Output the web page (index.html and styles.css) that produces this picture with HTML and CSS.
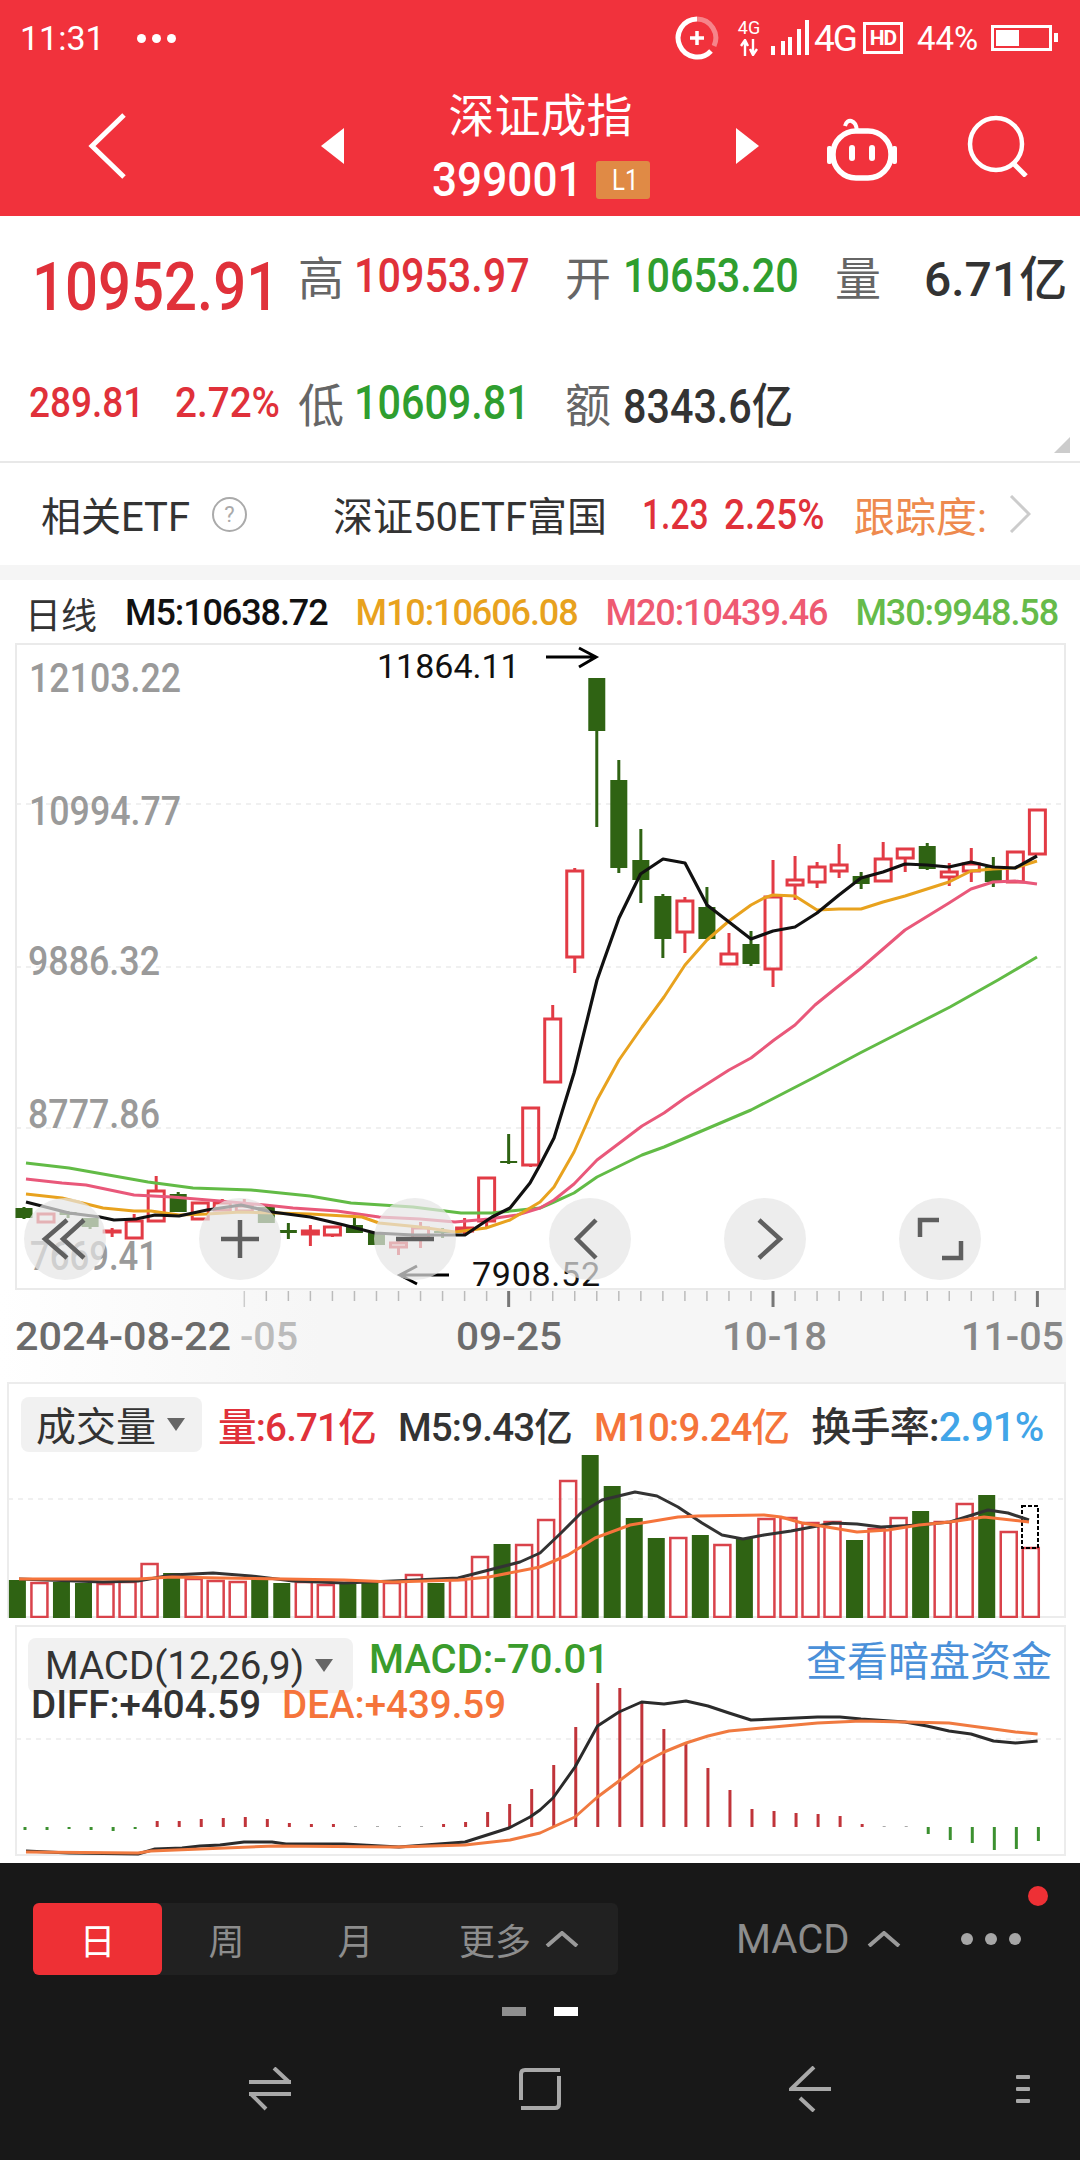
FILE: index.html
```html
<!DOCTYPE html>
<html lang="zh">
<head>
    <meta charset="UTF-8">
    <meta name="viewport" content="width=device-width, initial-scale=1.0">
    <title>深证成指</title>
    <link rel="stylesheet" href="styles.css">
</head>
<body>
<div class="app">

    <!-- Red header -->
    <header class="header">
        <div class="status">
            <div class="status-left">
                <span class="clock">11:31</span>
                <span class="status-dots"><i></i><i></i><i></i></span>
            </div>
            <div class="status-right">
                <svg class="ic-boost" viewBox="0 0 44 44">
                    <path d="M22 3 A19 19 0 1 0 36 35" fill="none" stroke="#fff" stroke-width="5"/>
                    <path d="M22 3 A19 19 0 0 1 39 30" fill="none" stroke="#fff" stroke-opacity=".4" stroke-width="5"/>
                    <path d="M15 22 H29 M22 15 V29" stroke="#fff" stroke-width="3.5"/>
                </svg>
                <div class="net">
                    <span>4G</span>
                    <svg viewBox="0 0 18 17" width="18" height="17">
                        <path d="M5 17 V2 M1 7 L5 1 L8 7 M13 0 V15 M10 10 L13 16 L17 10" fill="none" stroke="#fff" stroke-width="2.4"/>
                    </svg>
                </div>
                <svg class="ic-signal" viewBox="0 0 38 36">
                    <rect x="0" y="26" width="4" height="9" fill="#fff"/>
                    <rect x="10" y="21" width="4" height="14" fill="#fff"/>
                    <rect x="17" y="17" width="4" height="18" fill="#fff"/>
                    <rect x="26" y="9" width="4" height="26" fill="#fff"/>
                    <rect x="34" y="0" width="4" height="35" fill="#fff"/>
                </svg>
                <span class="net-big">4G</span>
                <span class="hd">HD</span>
                <span class="battery-text">44%</span>
                <div class="battery"><i></i></div>
            </div>
        </div>

        <div class="titlebar">
            <svg class="ic-back" viewBox="0 0 40 70">
                <path d="M36 4 L4 35 L36 66" fill="none" stroke="#fff" stroke-width="5"/>
            </svg>
            <span class="tri tri-left"></span>
            <div class="title">
                <div class="title-name">深证成指</div>
                <div class="title-code"><span class="code-num"><span class="squeeze sq-92">399001</span></span><span class="badge"><span class="squeeze sq-80">L1</span></span></div>
            </div>
            <span class="tri tri-right"></span>
            <div class="title-tools">
                <svg class="ic-robot" viewBox="0 0 70 64">
                    <path d="M18 9 C20 1 29 2 30 14" fill="none" stroke="#fff" stroke-width="4"/>
                    <rect x="6" y="14" width="58" height="47" rx="23" fill="none" stroke="#fff" stroke-width="5.5"/>
                    <rect x="0" y="29" width="5" height="18" rx="2" fill="#fff"/>
                    <rect x="65" y="29" width="5" height="18" rx="2" fill="#fff"/>
                    <rect x="22" y="28" width="6" height="16" rx="3" fill="#fff"/>
                    <rect x="42" y="28" width="6" height="16" rx="3" fill="#fff"/>
                </svg>
                <svg class="ic-search" viewBox="0 0 62 62">
                    <circle cx="29" cy="29" r="26" fill="none" stroke="#fff" stroke-width="4.5"/>
                    <path d="M46 48 L59 61" stroke="#fff" stroke-width="5"/>
                </svg>
            </div>
        </div>
    </header>

    <!-- Quote block -->
    <section class="quote">
        <div class="price"><span class="squeeze sq-88">10952.91</span></div>
        <div class="q-label">高</div>
        <div class="q-num up"><span class="squeeze sq-86">10953.97</span></div>
        <div class="q-label">开</div>
        <div class="q-num down"><span class="squeeze sq-86">10653.20</span></div>
        <div class="q-label">量</div>
        <div class="q-num dark">6.71亿</div>

        <div class="change">
            <span class="change-val"><span class="squeeze sq-88">289.81</span></span>
            <span class="change-val"><span class="squeeze sq-92">2.72%</span></span>
        </div>
        <div class="q-label">低</div>
        <div class="q-num down"><span class="squeeze sq-86">10609.81</span></div>
        <div class="q-label">额</div>
        <div class="q-num dark"><span class="squeeze sq-86">8343.6亿</span></div>
        <span class="corner"></span>
    </section>

    <section class="etf">
        <span class="etf-title">相关ETF</span>
        <span class="etf-help">?</span>
        <span class="etf-name">深证50ETF富国</span>
        <span class="etf-val"><span class="squeeze sq-80">1.23</span></span>
        <span class="etf-val"><span class="squeeze sq-88">2.25%</span></span>
        <span class="etf-track">跟踪度:</span>
        <svg class="ic-more" viewBox="0 0 22 38">
            <path d="M2 1 L20 19 L2 37" fill="none" stroke="#ccc" stroke-width="3"/>
        </svg>
    </section>

    <!-- K line -->
    <section class="kline">
        <div class="legend">
            <span class="legend-name">日线</span>
            <span class="c-m5">M5:10638.72</span>
            <span class="c-m10">M10:10606.08</span>
            <span class="c-m20">M20:10439.46</span>
            <span class="c-m30">M30:9948.58</span>
        </div>
        <div class="kline-chart">
            <svg id="main-chart" class="chart" viewBox="0 643 1080 739">
                <defs>
                    <linearGradient id="axis-fade" x1="0" x2="1" y1="0" y2="0">
                        <stop offset="0" stop-color="#fff"/>
                        <stop offset=".3" stop-color="#f6f6f6"/>
                    </linearGradient>
                </defs>
                <rect x="0" y="1290" width="1066" height="92" fill="url(#axis-fade)"/>
                <rect x="16" y="644" width="1049" height="645" fill="#fff" stroke="#eaeaea" stroke-width="2"/>
                <path class="grid" d="M16 804 H1065 M16 967 H1065 M16 1128 H1065"/>
                <text class="y-label" x="29" y="692" textLength="152" lengthAdjust="spacingAndGlyphs">12103.22</text>
                <text class="y-label" x="29" y="825" textLength="152" lengthAdjust="spacingAndGlyphs">10994.77</text>
                <text class="y-label" x="28" y="975" textLength="132" lengthAdjust="spacingAndGlyphs">9886.32</text>
                <text class="y-label" x="28" y="1128" textLength="132" lengthAdjust="spacingAndGlyphs">8777.86</text>
                <text class="y-label" x="30" y="1270" textLength="128" lengthAdjust="spacingAndGlyphs">7669.41</text>
                <text class="x-label" x="15" y="1350" textLength="216" lengthAdjust="spacingAndGlyphs">2024-08-22</text>
                <text class="x-label x-faded" x="240" y="1350" textLength="58" lengthAdjust="spacingAndGlyphs">-05</text>
                <text class="x-label" x="456" y="1350" textLength="106" lengthAdjust="spacingAndGlyphs">09-25</text>
                <text class="x-label x-light" x="722" y="1350" textLength="105" lengthAdjust="spacingAndGlyphs">10-18</text>
                <text class="x-label x-light" x="961" y="1350" textLength="103" lengthAdjust="spacingAndGlyphs">11-05</text>
                <text class="mark" x="377" y="678">11864.11</text>
                <path class="mark-arrow" d="M546 657 H596 M579 648 L596 657 L579 667"/>
                <text class="mark" x="472" y="1286" textLength="128">7908.52</text>
                <path class="mark-arrow" d="M449 1275 H400 M417 1266 L400 1275 L417 1284"/>
            </svg>
            <div class="chart-btns">
                <button class="round-btn">
                    <svg viewBox="0 0 82 82"><path d="M43 22 L21 41 L43 60 M60 22 L39 41 L60 60"/></svg>
                </button>
                <button class="round-btn">
                    <svg viewBox="0 0 82 82"><path d="M22 41 H60 M41 22 V60"/></svg>
                </button>
                <button class="round-btn">
                    <svg viewBox="0 0 82 82"><path d="M22 41 H60"/></svg>
                </button>
                <button class="round-btn">
                    <svg viewBox="0 0 82 82"><path d="M47 22 L28 41 L47 60"/></svg>
                </button>
                <button class="round-btn">
                    <svg viewBox="0 0 82 82"><path d="M35 22 L56 41 L35 60"/></svg>
                </button>
                <button class="round-btn">
                    <svg viewBox="0 0 82 82"><path d="M21 39 V22 H40 M43 60 H62 V43"/></svg>
                </button>
            </div>
        </div>
    </section>

    <!-- Volume -->
    <section class="panel panel-vol">
        <svg id="vol-chart" class="chart" viewBox="0 1382 1080 236"></svg>
        <div class="panel-head vol-head">
            <span class="chip">成交量<i class="chip-arrow"></i></span>
            <span class="up">量:6.71亿</span>
            <span class="dark">M5:9.43亿</span>
            <span class="c-orange">M10:9.24亿</span>
            <span class="dark vol-turn">换手率:<span class="c-blue">2.91%</span></span>
        </div>
    </section>

    <!-- MACD -->
    <section class="panel panel-macd">
        <svg id="macd-chart" class="chart" viewBox="0 1625 1080 231"></svg>
        <div class="panel-head macd-head">
            <div class="macd-top">
                <span class="chip">MACD(12,26,9)<i class="chip-arrow"></i></span>
                <span class="macd-value">MACD:-70.01</span>
                <span class="macd-link">查看暗盘资金</span>
            </div>
            <div class="macd-sub">
                <span class="dark">DIFF:+404.59</span>
                <span class="c-orange">DEA:+439.59</span>
            </div>
        </div>
    </section>

    <!-- Dark bottom -->
    <footer class="bottom">
        <div class="periods">
            <div class="period-group">
                <span class="period active">日</span>
                <span class="period">周</span>
                <span class="period">月</span>
                <span class="period period-more">更多<svg class="ic-up" viewBox="0 0 34 16"><path d="M2 15 L17 2 L32 15"/></svg></span>
            </div>
            <span class="indicator">MACD<svg class="ic-up" viewBox="0 0 34 16"><path d="M2 15 L17 2 L32 15"/></svg></span>
            <span class="more-dots"><i></i><i></i><i></i></span>
            <span class="red-dot"></span>
        </div>
        <div class="pager"><i></i><i class="on"></i></div>
        <div class="navbar">
            <svg viewBox="0 0 42 44" width="42" height="44">
                <path d="M0 15 H42 M25 1 L40 15 M42 27 H0 M2 27 L17 42"/>
            </svg>
            <svg viewBox="0 0 42 44" width="42" height="44">
                <path d="M2 33 V7 Q2 3 6 3 H41 M40 9 V37 Q40 41 36 41 H2"/>
            </svg>
            <svg viewBox="0 0 42 46" width="42" height="46">
                <path d="M25 1 L2 23 H42 M11 32 L25 45"/>
            </svg>
            <div class="nav-menu"><i></i><i></i><i></i></div>
        </div>
    </footer>
</div>

<script src="charts.js"></script>
</body>
</html>
```

FILE: styles.css
```css
* {
    box-sizing: border-box;
}
body {
    margin: 0;
    background: #fff;
    font-family: Roboto, "Noto Sans CJK SC", sans-serif;
}
i {
    display: block;
}
.app {
    width: 1080px;
    height: 2160px;
    overflow: hidden;
    color: #333;
}

/* the numbers up top are a condensed face, no such font here */
.squeeze {
    display: inline-block;
    white-space: nowrap;
    transform-origin: left center;
}
.sq-80 {
    transform: scaleX(.8);
}
.sq-86 {
    transform: scaleX(.86);
}
.sq-88 {
    transform: scaleX(.88);
}
.sq-92 {
    transform: scaleX(.92);
}

/* header */
.header {
    height: 216px;
    background: #f1323c;
    color: #fff;
}
.status {
    height: 76px;
    display: flex;
    justify-content: space-between;
    align-items: center;
}
.status-left {
    display: flex;
    align-items: center;
    padding-left: 20px;
    gap: 32px;
}
.clock {
    font-size: 34px;
}
.status-dots {
    display: flex;
    gap: 6px;
}
.status-dots i {
    width: 9px;
    height: 9px;
    border-radius: 50%;
    background: #fff;
}
.status-right {
    display: flex;
    align-items: center;
    padding-right: 28px;
}
.ic-boost {
    width: 44px;
    height: 44px;
}
.net {
    width: 26px;
    margin-left: 17px;
    display: flex;
    flex-direction: column;
    align-items: center;
    gap: 3px;
    font-size: 18px;
    line-height: 16px;
}
.ic-signal {
    width: 38px;
    height: 36px;
    margin-left: 9px;
}
.net-big {
    font-size: 37px;
    letter-spacing: -2px;
    margin-left: 5px;
}
.hd {
    margin-left: 7px;
    width: 40px;
    height: 32px;
    border: 3px solid #fff;
    font-size: 21px;
    font-weight: 700;
    line-height: 26px;
    text-align: center;
    letter-spacing: -1px;
}
.battery-text {
    font-size: 33px;
    margin-left: 14px;
    width: 65px;
}
.battery {
    position: relative;
    width: 61px;
    height: 26px;
    margin-left: 9px;
    border: 3px solid #fff;
    padding: 2px;
}
.battery i {
    width: 23px;
    height: 16px;
    background: #fff;
}
.battery::after {
    content: "";
    position: absolute;
    right: -9px;
    top: 5px;
    width: 4px;
    height: 9px;
    background: #fff;
}
.titlebar {
    height: 140px;
    display: grid;
    grid-template-columns: 321px 24px 391px 24px 1fr;
    align-items: center;
}
.ic-back {
    width: 40px;
    height: 70px;
    margin-left: 88px;
}
.tri {
    width: 0;
    height: 0;
    border-top: 18px solid transparent;
    border-bottom: 18px solid transparent;
}
.tri-left {
    border-right: 23px solid #fff;
}
.tri-right {
    border-left: 23px solid #fff;
}
.title {
    text-align: center;
}
.title-name {
    font-size: 46px;
    line-height: 48px;
}
.title-code {
    margin-top: 20px;
    height: 40px;
    display: flex;
    justify-content: center;
    align-items: center;
    gap: 17px;
}
.code-num {
    width: 147px;
    font-size: 48px;
    font-weight: 500;
    line-height: 40px;
    text-align: left;
}
.badge {
    width: 54px;
    height: 38px;
    padding-left: 16px;
    background: #e08a45;
    border-radius: 3px;
    font-size: 30px;
    line-height: 38px;
    text-align: left;
}
.title-tools {
    display: flex;
    align-items: center;
    padding-left: 67px;
    gap: 70px;
}
.ic-robot {
    width: 70px;
    height: 64px;
    margin-top: 6px;
}
.ic-search {
    width: 62px;
    height: 62px;
}

/* quote */
.quote {
    position: relative;
    height: 247px;
    padding-top: 4px;
    border-bottom: 2px solid #e8e8e8;
    display: grid;
    grid-template-columns: 298px 56px 211px 58px 212px 89px 1fr;
    grid-auto-rows: 110px;
    row-gap: 17px;
    align-items: center;
}
.price {
    padding: 24px 0 0 32px;
    font-size: 66px;
    font-weight: 500;
    color: #e0313a;
}
.q-label {
    font-family: "Noto Sans CJK SC", sans-serif;
    font-size: 46px;
    color: #666;
}
.q-num {
    font-size: 48px;
    font-weight: 500;
    white-space: nowrap;
}
.change {
    display: flex;
    padding-left: 29px;
    font-size: 42px;
    font-weight: 500;
    color: #e0313a;
}
.change-val {
    flex: none;
    width: 146px;
}
.up {
    color: #e0313a;
}
.down {
    color: #2f9e2f;
}
.dark {
    color: #333;
}
.corner {
    position: absolute;
    right: 10px;
    bottom: 8px;
    width: 0;
    height: 0;
    border-left: 16px solid transparent;
    border-bottom: 16px solid #ccc;
}

/* etf row */
.etf {
    height: 117px;
    display: flex;
    align-items: center;
    font-size: 38px;
    border-bottom: 15px solid #f5f5f5;
}
.etf > * {
    flex: none;
}
.etf-title {
    margin-left: 41px;
    width: 171px;
    font-size: 40px;
}
.etf-help {
    width: 35px;
    height: 35px;
    border: 2px solid #aaa;
    border-radius: 50%;
    color: #aaa;
    font-size: 22px;
    line-height: 31px;
    text-align: center;
}
.etf-name {
    margin-left: 86px;
    width: 309px;
    font-size: 40px;
}
.etf-val {
    width: 82px;
    color: #e0313a;
    font-size: 42px;
    font-weight: 500;
}
.etf-val + .etf-val {
    width: 130px;
}
.etf-track {
    width: 155px;
    color: #ee8a4e;
    font-size: 41px;
}
.ic-more {
    width: 22px;
    height: 38px;
}

/* k line */
.legend {
    height: 63px;
    padding: 3px 0 0 25px;
    display: flex;
    align-items: center;
    gap: 28px;
    font-size: 36px;
    font-weight: 500;
    letter-spacing: -1.1px;
    white-space: nowrap;
}
.legend-name {
    font-family: "Noto Sans CJK SC", sans-serif;
    font-weight: 400;
    font-size: 36px;
    letter-spacing: 0;
}
.c-m5 {
    color: #111;
}
.c-m10 {
    color: #e8a21e;
}
.c-m20 {
    color: #ee5a72;
}
.c-m30 {
    color: #66bb4a;
}
.c-orange {
    color: #f5743b;
}
.c-blue {
    color: #41a5e8;
}
.kline-chart {
    position: relative;
    height: 739px;
}
.chart {
    display: block;
    width: 1080px;
}
.grid {
    fill: none;
    stroke: #ebebeb;
    stroke-width: 1.5;
    stroke-dasharray: 5 5;
}
.y-label {
    font-size: 40px;
    font-weight: 500;
    fill: #9a9a9a;
}
.x-label {
    font-size: 38px;
    font-weight: 500;
    fill: #6b6b6b;
}
.x-light {
    fill: #888;
}
.x-faded {
    fill: #bbb;
}
.mark {
    font-size: 34px;
    fill: #111;
}
.mark-arrow {
    fill: none;
    stroke: #000;
    stroke-width: 3;
}
.chart-btns {
    position: absolute;
    left: 24px;
    top: 555px;
    display: flex;
    gap: 93px;
}
.round-btn {
    width: 82px;
    height: 82px;
    padding: 0;
    border: 0;
    border-radius: 50%;
    background: rgba(230, 230, 230, .7);
}
.round-btn svg {
    display: block;
    fill: none;
    stroke: #5f5f5f;
    stroke-width: 4.5;
}

/* lower panels */
.panel {
    position: relative;
}
.panel-vol {
    height: 243px;
}
.panel-macd {
    height: 238px;
}
.panel-head {
    position: absolute;
    left: 0;
    top: 0;
    width: 1080px;
    font-size: 38.5px;
    font-weight: 500;
    white-space: nowrap;
}
.vol-head {
    padding: 13px 0 0 21px;
    display: flex;
    align-items: center;
    gap: 22px;
    letter-spacing: -.8px;
}
.vol-turn {
    font-size: 40px;
}
.chip {
    height: 55px;
    padding-left: 15px;
    display: flex;
    align-items: center;
    background: #f1f1f1;
    border-radius: 8px;
    color: #333;
    font-weight: 400;
    letter-spacing: 0;
}
.vol-head .chip {
    width: 181px;
    font-size: 40px;
    font-family: "Noto Sans CJK SC", sans-serif;
    margin-right: -6px;
}
.chip-arrow {
    margin-left: 11px;
    width: 0;
    height: 0;
    border-left: 9px solid transparent;
    border-right: 9px solid transparent;
    border-top: 13px solid #666;
}
.macd-head {
    padding: 13px 0 0 28px;
}
.macd-top {
    display: flex;
    align-items: flex-start;
}
.macd-head .chip {
    width: 325px;
    padding-left: 17px;
}
.macd-value {
    margin-left: 16px;
    margin-top: -2px;
    font-size: 40px;
    color: #3a9c2c;
}
.macd-link {
    margin-left: 197px;
    margin-top: -10px;
    font-family: "Noto Sans CJK SC", sans-serif;
    font-size: 41px;
    font-weight: 400;
    color: #4a90d9;
}
.macd-sub {
    display: flex;
    gap: 21px;
    margin: -10px 0 0 3px;
    line-height: 44px;
}

/* dark bottom */
.bottom {
    height: 297px;
    background: #181818;
    color: #8d8d8d;
}
.periods {
    position: relative;
    padding: 40px 0 0 33px;
    display: flex;
    align-items: center;
}
.period-group {
    width: 585px;
    height: 72px;
    background: #212121;
    border-radius: 6px;
    display: flex;
    align-items: center;
    font-size: 36px;
}
.period {
    width: 129px;
    height: 72px;
    display: flex;
    align-items: center;
    justify-content: center;
    border-radius: 6px;
}
.period.active {
    background: #ee3035;
    color: #fff;
}
.period-more {
    width: 198px;
    gap: 14px;
}
.ic-up {
    width: 34px;
    height: 16px;
    fill: none;
    stroke: #9a9a9a;
    stroke-width: 4;
}
.indicator {
    margin-left: 118px;
    display: flex;
    align-items: center;
    gap: 18px;
    font-size: 40px;
}
.more-dots {
    margin-left: 60px;
    display: flex;
    gap: 12px;
}
.more-dots i {
    width: 12px;
    height: 12px;
    border-radius: 50%;
    background: #a6a6a6;
}
.red-dot {
    position: absolute;
    left: 1028px;
    top: 23px;
    width: 20px;
    height: 20px;
    border-radius: 50%;
    background: #ee3035;
}
.pager {
    margin-top: 32px;
    display: flex;
    justify-content: center;
    gap: 28px;
}
.pager i {
    width: 24px;
    height: 9px;
    background: #8f8f8f;
}
.pager i.on {
    background: #fff;
}
.navbar {
    margin-top: 50px;
    padding-left: 249px;
    display: flex;
    align-items: center;
    gap: 228px;
}
.navbar svg {
    fill: none;
    stroke: #a8a8a8;
    stroke-width: 4;
}
.nav-menu {
    margin-left: -43px;
    display: flex;
    flex-direction: column;
    gap: 8px;
}
.nav-menu i {
    width: 14px;
    height: 4px;
    background: #a8a8a8;
    border-radius: 1px;
}
```

FILE: charts.js
```js
// chart data is in page pixels, the svg viewBoxes use the same coordinates
const SVG_NS = 'http://www.w3.org/2000/svg';

function add(parent, name, attrs) {
    const node = document.createElementNS(SVG_NS, name);
    for (const key in attrs) node.setAttribute(key, attrs[key]);
    parent.appendChild(node);
    return node;
}

function drawLine(parent, points, color, width) {
    add(parent, 'polyline', {
        points: points.map(p => p.join(',')).join(' '),
        fill: 'none',
        stroke: color,
        'stroke-width': width,
        'stroke-linejoin': 'round'
    });
}

const RED = '#e23b45';
const GREEN = '#2f6313';

// kind, high, top, bottom, low
const candles = [
    ['g', 1207, 1208, 1218, 1219], ['r', 1213, 1214, 1222, 1223], ['g', 1211, 1212, 1215, 1218],
    ['g', 1218, 1218, 1227, 1229], ['r', 1228, 1231, 1232, 1237], ['r', 1214, 1221, 1238, 1238],
    ['r', 1176, 1191, 1221, 1221], ['g', 1192, 1194, 1212, 1212], ['r', 1202, 1203, 1219, 1219],
    ['r', 1199, 1203, 1210, 1211], ['r', 1199, 1206, 1211, 1212], ['g', 1205, 1207, 1223, 1223],
    ['g', 1223, 1230, 1233, 1239], ['r', 1225, 1231, 1234, 1246], ['r', 1227, 1227, 1235, 1237],
    ['g', 1217, 1225, 1233, 1233], ['g', 1233, 1233, 1245, 1245], ['r', 1241, 1243, 1247, 1255],
    ['r', 1222, 1228, 1238, 1248], ['g', 1228, 1231, 1233, 1238], ['r', 1218, 1228, 1231, 1235],
    ['r', 1177, 1178, 1221, 1227], ['g', 1134, 1161, 1163, 1164], ['r', 1107, 1108, 1165, 1167],
    ['r', 1005, 1019, 1082, 1082], ['r', 868, 871, 957, 973], ['g', 678, 678, 731, 827],
    ['g', 760, 780, 868, 873], ['g', 829, 860, 880, 903], ['g', 894, 896, 939, 958],
    ['r', 897, 901, 932, 953], ['g', 887, 907, 939, 939], ['r', 933, 954, 964, 964],
    ['g', 931, 944, 964, 966], ['r', 860, 897, 969, 987], ['r', 856, 880, 885, 900],
    ['r', 862, 867, 882, 888], ['r', 844, 865, 871, 878], ['g', 872, 876, 884, 889],
    ['r', 842, 859, 881, 881], ['r', 849, 849, 858, 872], ['g', 843, 846, 869, 870],
    ['r', 863, 872, 877, 886], ['r', 848, 864, 871, 882], ['g', 857, 867, 882, 887],
    ['r', 852, 852, 882, 882], ['r', 810, 810, 854, 854]
];

const ma5 = [[26,1202],[69,1213],[100,1217],[114,1220],[136,1219],[155,1215],[179,1216],[207,1210],[241,1205],[272,1212],[310,1217],[344,1225],[375,1233],[413,1235],[465,1235],[492,1217],[510,1208],[530,1183],[540,1165],[554,1138],[574,1073],[597,980],[604,960],[619,918],[640.5,874],[663,859],[685,863],[707,905],[729,922],[751,939],[773,931],[795,927],[817,913],[839,895],[861,878],[883,872],[905,864],[927,865],[949,867],[971,862],[993,867],[1015,868],[1037,856]];
const ma10 = [[26,1194],[62,1198],[103,1208],[134,1211],[151,1211],[179,1215],[207,1214],[241,1212],[275,1213],[310,1214],[362,1217],[379,1223],[420,1227],[455,1232],[486,1228],[510,1220],[530,1208],[540,1202],[554,1187],[574,1152],[597,1100],[619,1060],[642,1027],[664,997],[685,965],[707,940],[729,921],[751,905],[764,898],[773,895],[795,896],[817,910],[839,909],[861,909],[883,902],[905,896],[927,889],[949,882],[971,871],[993,869],[1015,868],[1037,861]];
const ma20 = [[26,1179],[62,1183],[86,1185],[134,1195],[172,1197],[220,1201],[265,1205],[293,1208],[337,1211],[379,1217],[420,1219],[455,1222],[489,1219],[517,1215],[540,1208],[554,1200],[574,1184],[597,1160],[642,1126],[664,1113],[685,1098],[729,1070],[751,1058],[774,1040],[795,1025],[815,1005],[836,988],[860,969],[905,930],[949,903],[971,889],[993,882],[1015,881],[1037,884]];
const ma30 = [[26,1163],[69,1168],[148,1182],[193,1188],[251,1190],[310,1196],[351,1203],[413,1207],[461,1213],[492,1213],[540,1208],[554,1202],[574,1193],[597,1177],[642,1155],[664,1147],[751,1110],[815,1077],[860,1053],[905,1030],[950,1007],[998,980],[1037,957]];

function drawCandles(svg) {
    candles.forEach((c, i) => {
        const x = 24 + 22.03 * i;
        const color = c[0] === 'r' ? RED : GREEN;
        add(svg, 'path', {
            d: `M${x} ${c[1]} V${c[2]} M${x} ${c[3]} V${c[4]}`,
            stroke: color,
            'stroke-width': 3
        });
        if (c[0] === 'r') {
            add(svg, 'rect', { x: x - 8, y: c[2], width: 16, height: c[3] - c[2], fill: 'none', stroke: color, 'stroke-width': 3 });
        } else {
            add(svg, 'rect', { x: x - 8.5, y: c[2], width: 17, height: c[3] - c[2], fill: color });
        }
    });
}

function drawTicks(svg) {
    for (let i = 10; i <= 46; i++) {
        const x = 24 + 22.03 * i;
        const long = (i - 10) % 12 === 0;
        add(svg, 'line', {
            x1: x, x2: x, y1: 1291, y2: long ? 1307 : 1301,
            stroke: i === 10 ? '#ccc' : long ? '#777' : '#bbb',
            'stroke-width': long && i > 10 ? 3 : 1.5
        });
    }
}

const mainChart = document.getElementById('main-chart');
drawTicks(mainChart);
drawCandles(mainChart);
drawLine(mainChart, ma30, '#62bb46', 3);
drawLine(mainChart, ma20, '#e9587a', 3);
drawLine(mainChart, ma10, '#e8a21e', 3);
drawLine(mainChart, ma5, '#111', 3.2);

// volume: g = solid green, r = hollow red, value is the bar top
const volumes = [
    ['g',1580],['r',1583],['g',1582],['g',1583],['r',1584],['r',1582],['r',1564],['g',1573],
    ['r',1579],['r',1581],['r',1582],['g',1579],['g',1583],['r',1582],['r',1585],['g',1583],
    ['g',1583],['r',1583],['r',1575],['g',1583],['r',1580],['r',1557],['g',1544],['r',1545],
    ['r',1520],['r',1481],['g',1455],['g',1486],['g',1518],['g',1538],['r',1538],['g',1535],
    ['r',1545],['g',1538],['r',1519],['r',1518],['r',1523],['r',1522],['g',1540],['r',1529],
    ['r',1518],['g',1511],['r',1522],['r',1504],['g',1495],['r',1532],['r',1548]
];
const volM5 = [[19,1579],[103,1582],[138,1581],[172,1575],[213,1573],[251,1576],[293,1581],[344,1583],[393,1581],[458,1578],[489,1570],[520,1562],[540,1553],[561,1533],[581,1513],[602,1500],[635,1492],[657,1496],[678,1507],[702,1523],[722,1535],[743,1539],[764,1535],[791,1531],[833,1523],[857,1524],[881,1527],[919,1525],[950,1522],[988,1510],[1008,1513],[1029,1520]];
const volM10 = [[19,1579],[138,1579],[172,1577],[220,1578],[344,1580],[393,1582],[458,1580],[489,1577],[540,1567],[568,1555],[595,1538],[630,1525],[678,1517],[698,1516],[764,1515],[781,1517],[802,1523],[833,1528],[857,1532],[888,1530],[919,1525],[950,1522],[984,1517],[1029,1522]];

const volChart = document.getElementById('vol-chart');
add(volChart, 'rect', { x: 8, y: 1383, width: 1057, height: 234, fill: '#fff', stroke: '#ececec', 'stroke-width': 2 });
add(volChart, 'path', { class: 'grid', d: 'M8 1499 H1065' });
volumes.forEach((v, i) => {
    const x = 17.4 + 22.03 * i;
    if (v[0] === 'g') {
        add(volChart, 'rect', { x: x - 8.5, y: v[1], width: 17, height: 1618 - v[1], fill: GREEN });
    } else {
        add(volChart, 'rect', { x: x - 8, y: v[1], width: 16, height: 1617 - v[1], fill: 'none', stroke: '#d9434b', 'stroke-width': 2.5 });
    }
});
add(volChart, 'rect', { x: 1022, y: 1506, width: 16, height: 42, fill: 'none', stroke: '#000', 'stroke-width': 2, 'stroke-dasharray': '4 2' });
drawLine(volChart, volM5, '#333', 3);
drawLine(volChart, volM10, '#f5743b', 3);

// macd histogram, px above (+) or below (-) the zero line
const hist = [-3,-3,-2,-3,-4,-2,6,6,8,9,10,8,4,3,3,1,1,1,1,3,5,15,23,38,62,100,144,139,125,98,83,59,37,18,16,14,13,11,3,1,1,-7,-13,-16,-23,-22,-14];
const diff = [[26,1851],[69,1853],[138,1854],[155,1849],[182,1848],[200,1846],[220,1845],[244,1842],[272,1842],[286,1844],[344,1844],[399,1847],[465,1842],[509,1828],[530,1817],[540,1810],[553,1798],[575,1767],[597.5,1726],[619,1712],[641.6,1702],[664,1704],[686,1701],[708,1706],[729,1713],[751,1720],[773.5,1719],[817.5,1717],[840,1717],[861,1719],[905,1722],[927,1726],[949,1731],[971,1734],[993.5,1741],[1015.5,1743],[1037.6,1741]];
const dea = [[26,1852],[138,1853],[151,1851],[275,1846],[396,1847],[465,1845],[510,1840],[540,1833],[553,1827],[575,1817],[597.5,1797],[619,1781],[641.6,1764],[664,1752],[686,1743],[708,1736],[729,1731],[751,1729],[773.5,1727],[817.5,1723],[861,1721],[905,1722],[949,1723],[971,1726],[993.5,1729],[1015.5,1732],[1037.6,1734]];

const macdChart = document.getElementById('macd-chart');
add(macdChart, 'rect', { x: 16, y: 1626, width: 1049, height: 229, fill: '#fff', stroke: '#ececec', 'stroke-width': 2 });
add(macdChart, 'path', { class: 'grid', d: 'M16 1739 H1065' });
hist.forEach((h, i) => {
    const x = 25 + 22.03 * i;
    const faint = (i >= 15 && i <= 18) || i === 39 || i === 40;
    add(macdChart, 'line', {
        x1: x, x2: x, y1: 1827, y2: 1827 - h,
        stroke: faint ? '#aaa' : h > 0 ? '#c0343a' : '#3c9030',
        'stroke-width': 3
    });
});
drawLine(macdChart, diff, '#2b2b2b', 3);
drawLine(macdChart, dea, '#f07a40', 3);
```
